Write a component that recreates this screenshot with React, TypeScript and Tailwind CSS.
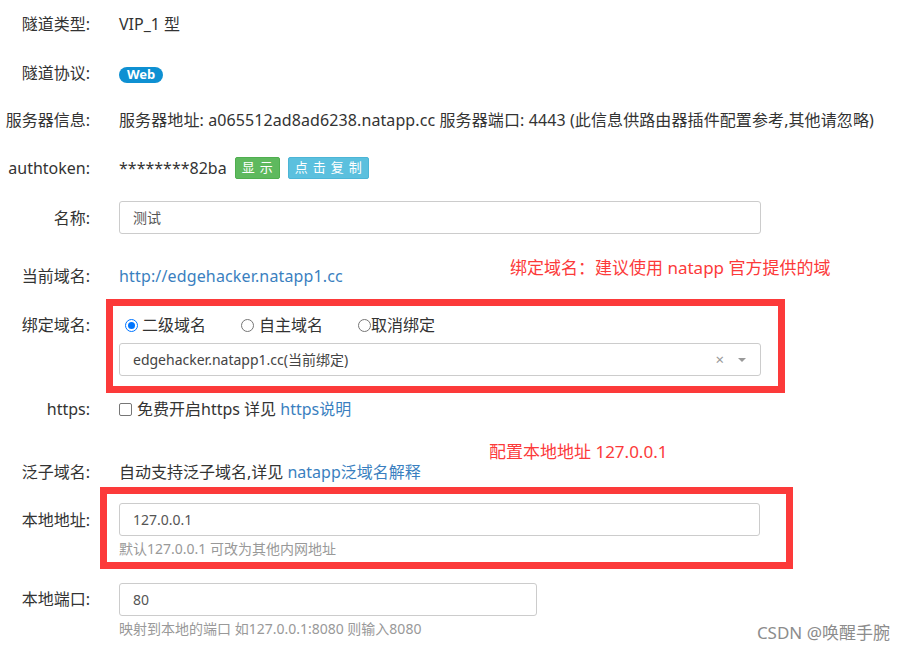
export default function App() {
  const font = { fontFamily: '"Noto Sans", "Noto Sans CJK SC", sans-serif' };
  return (
    <div className="relative w-[903px] h-[652px] bg-white text-[#333] text-[16px] overflow-hidden" style={font}>
      {/* 隧道类型 */}
      <div className="flex items-center h-[48px]">
        <div className="w-[90px] text-right">隧道类型:</div>
        <div className="ml-[29px]">VIP_1 型</div>
      </div>
      {/* 隧道协议 */}
      <div className="flex items-center h-[50px]">
        <div className="w-[90px] text-right">隧道协议:</div>
        <div className="ml-[29px]">
          <span className="inline-flex items-center h-[16px] px-[8px] rounded-full bg-[#0e90d2] text-white text-[13px] font-bold leading-none">Web</span>
        </div>
      </div>
      {/* 服务器信息 */}
      <div className="flex items-center h-[44px]">
        <div className="w-[90px] text-right">服务器信息:</div>
        <div className="ml-[29px] whitespace-nowrap tracking-[0.1px]">
          服务器地址: a065512ad8ad6238.natapp.cc 服务器端口: 4443 (此信息供路由器插件配置参考,其他请忽略)
        </div>
      </div>
      {/* authtoken */}
      <div className="flex items-center h-[52px]">
        <div className="w-[90px] text-right">authtoken:</div>
        <div className="ml-[29px] flex items-center">
          <span>********82ba</span>
          <span className="ml-[8px] h-[22px] pl-[6px] pr-[1px] flex items-center rounded-[2px] bg-[#5eb95e] border border-[#4fae4f] text-white text-[13px] tracking-[5px]">显示</span>
          <span className="ml-[8px] h-[22px] pl-[6px] pr-[1px] flex items-center rounded-[2px] bg-[#5bc0de] border border-[#4cb5d6] text-white text-[13px] tracking-[5px]">点击复制</span>
        </div>
      </div>
      {/* 名称 */}
      <div className="flex items-center h-[47px]">
        <div className="w-[90px] text-right">名称:</div>
        <div className="ml-[29px] w-[642px] h-[33px] border border-[#ccc] rounded-[3px] flex items-center px-[13px] text-[14px] text-[#555]">测试</div>
      </div>
      {/* 当前域名 */}
      <div className="relative flex items-start h-[58px] pt-[23px] leading-[24px]">
        <div className="w-[90px] text-right">当前域名:</div>
        <div className="ml-[29px] text-[#3a7fc0] tracking-[0.15px]">http://edgehacker.natapp1.cc</div>
        <div className="absolute left-[510px] top-[15px] text-[#fc3a3a] text-[17px] whitespace-nowrap">绑定域名：建议使用 natapp 官方提供的域</div>
      </div>
      {/* 绑定域名 */}
      <div className="flex items-start h-[94px]">
        <div className="w-[90px] text-right pt-[14px] leading-[24px]">绑定域名:</div>
        <div className="ml-[16px] w-[679px] h-[94px] border-[7px] border-[#fc3a3a] pt-[7px] pl-[6px] pr-[17px]">
          <div className="flex items-center h-[24px]">
            <span className="ml-[6px] w-[13px] h-[13px] rounded-full border border-[#0075ff] flex items-center justify-center">
              <span className="w-[7px] h-[7px] rounded-full bg-[#0075ff]" />
            </span>
            <span className="ml-[4px]">二级域名</span>
            <span className="ml-[35px] w-[13px] h-[13px] rounded-full border border-[#767676]" />
            <span className="ml-[5px]">自主域名</span>
            <span className="ml-[35px] w-[13px] h-[13px] rounded-full border border-[#767676]" />
            <span>取消绑定</span>
          </div>
          <div className="mt-[6px] h-[33px] border border-[#ccc] rounded-[3px] flex items-center pl-[13px] pr-[14px] text-[14px] text-[#444]">
            <span>edgehacker.natapp1.cc(当前绑定)</span>
            <span className="ml-auto text-[#999] text-[15px] leading-none">×</span>
            <span className="ml-[14px] w-0 h-0 border-l-[4px] border-r-[4px] border-t-[4px] border-l-transparent border-r-transparent border-t-[#999]" />
          </div>
        </div>
      </div>
      {/* https */}
      <div className="flex items-center h-[32px]">
        <div className="w-[90px] text-right">https:</div>
        <div className="ml-[29px] flex items-center">
          <span className="w-[13px] h-[13px] border border-[#767676] rounded-[2px]" />
          <span className="ml-[5px]">免费开启https 详见 <span className="text-[#3a7fc0]">https说明</span></span>
        </div>
      </div>
      {/* 泛子域名 */}
      <div className="relative flex items-start h-[62px] pt-[35px] leading-[24px]">
        <div className="w-[90px] text-right">泛子域名:</div>
        <div className="ml-[29px]">自动支持泛子域名,详见 <span className="text-[#3a7fc0]">natapp泛域名解释</span></div>
        <div className="absolute left-[489px] top-[15px] text-[#fc3a3a] text-[17px] whitespace-nowrap">配置本地地址 127.0.0.1</div>
      </div>
      {/* 本地地址 */}
      <div className="flex items-start h-[82px]">
        <div className="w-[90px] text-right pt-[21px] leading-[24px]">本地地址:</div>
        <div className="ml-[10px] w-[693px] h-[82px] border-[7px] border-[#fc3a3a] pt-[9px] pl-[12px] pr-[26px]">
          <div className="h-[33px] border border-[#ccc] rounded-[3px] flex items-center px-[13px] text-[14px] text-[#555]">127.0.0.1</div>
          <div className="mt-[4px] leading-[18px] text-[14px] text-[#999]">默认127.0.0.1 可改为其他内网地址</div>
        </div>
      </div>
      {/* 本地端口 */}
      <div className="flex items-start mt-[14px]">
        <div className="w-[90px] text-right leading-[33px]">本地端口:</div>
        <div className="ml-[29px]">
          <div className="w-[418px] h-[33px] border border-[#ccc] rounded-[3px] flex items-center px-[13px] text-[14px] text-[#555]">80</div>
          <div className="mt-[4px] leading-[18px] text-[14px] text-[#999]">映射到本地的端口 如127.0.0.1:8080 则输入8080</div>
        </div>
      </div>
      <div className="absolute right-[13px] bottom-[7px] text-[17px] text-[#8c8c8c] whitespace-nowrap">CSDN @唤醒手腕</div>
    </div>
  );
}
